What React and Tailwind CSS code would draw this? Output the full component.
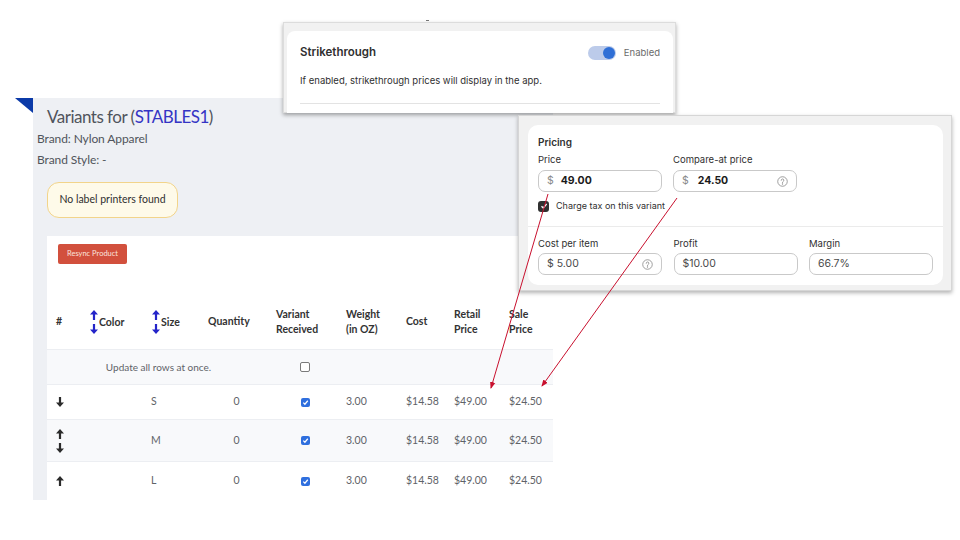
import React from 'react';

// column widths for the variants table (card starts at x=47)
const cols = ['w-[38px]', 'w-[62px]', 'w-[56px]', 'w-[67px]', 'w-[70px]', 'w-[60px]', 'w-[48px]', 'w-[55px]', 'w-[50px]'];

const variants = [
  { size: 'S', moves: ['down'], bg: 'bg-white border-b', h: 'h-[35px]' },
  { size: 'M', moves: ['up', 'down'], bg: 'bg-[#f8f9fb] border-b', h: 'h-[42px]' },
  { size: 'L', moves: ['up'], bg: 'bg-white', h: 'h-[38px]' },
];

const Arrow = ({ dir, color = '#2b2b2b', className = '' }) => (
  <svg width="8" height="10" viewBox="0 0 8 10" className={className}>
    {dir === 'up' ? (
      <polygon points="4,0 8,4.6 5.1,4.6 5.1,10 2.9,10 2.9,4.6 0,4.6" fill={color} />
    ) : (
      <polygon points="4,10 8,5.4 5.1,5.4 5.1,0 2.9,0 2.9,5.4 0,5.4" fill={color} />
    )}
  </svg>
);

const SortLabel = ({ label }) => (
  <div className="flex items-center gap-[1px]">
    <div className="flex flex-col gap-[4px]">
      <Arrow dir="up" color="#2424c9" />
      <Arrow dir="down" color="#2424c9" />
    </div>
    <span className="pt-[1px]">{label}</span>
  </div>
);

const BlueCheck = ({ checked }) =>
  checked ? (
    <div className="w-[9px] h-[9px] rounded-[2px] bg-[#2f6fde] flex items-center justify-center">
      <svg width="7" height="7" viewBox="0 0 8 8">
        <polyline points="1.5,4.2 3.3,6 6.6,2" fill="none" stroke="white" strokeWidth="1.4" />
      </svg>
    </div>
  ) : (
    <div className="w-[10px] h-[10px] rounded-[2px] bg-white border border-[#7a7a7a]" />
  );

const HelpIcon = () => (
  <svg width="11" height="11" viewBox="0 0 12 12" fill="none" stroke="#8a8a8a" strokeWidth="0.9">
    <circle cx="6" cy="6" r="5.2" />
    <path d="M4.6 4.7a1.45 1.45 0 1 1 2.1 1.3c-.5.25-.7.55-.7 1.1" strokeLinecap="round" />
    <circle cx="6" cy="8.7" r="0.35" fill="#8a8a8a" />
  </svg>
);

const PriceInput = ({ children, help }) => (
  <div className="h-[22px] border border-[#c9c9c9] rounded-[7px] flex items-center justify-between pl-[8px] pr-[8px] bg-white">
    <div className="flex items-center text-[10.5px]">{children}</div>
    {help && <HelpIcon />}
  </div>
);

const VariantsPanel = () => (
  <div className="absolute left-[33px] top-[98px] w-[520px] h-[402px] bg-[#eef0f4] font-['Lato',sans-serif] text-[#50545b]">
    <div className="pl-[14px] pt-[8px] text-[17px] tracking-[-0.5px] leading-[22px] text-[#50545c]">
      Variants for (<span className="text-[#3434c4]">STABLES1</span>)
    </div>
    <div className="pl-[4px] text-[12px] tracking-[-0.1px] leading-[21px]">Brand: Nylon Apparel</div>
    <div className="pl-[4px] text-[12px] tracking-[-0.1px] leading-[21px]">Brand Style: -</div>
    <div className="ml-[14px] mt-[12px] w-[131px] h-[36px] rounded-[12px] border-[1.5px] border-[#f2d48a] bg-[#fefae9] flex items-center justify-center text-[10.5px] text-[#2f2f2f]">
      No label printers found
    </div>
    <div className="ml-[14px] mt-[18px] w-[506px] h-[264px] bg-white">
      <div className="pl-[11px] pt-[8px]">
        <div className="w-[69px] h-[20px] rounded-[2px] bg-[#d2503d] text-[#fbe3de] text-[7.5px] flex items-center justify-center">
          Resync Product
        </div>
      </div>
      <div className="mt-[30px] flex h-[56px] items-center text-[10.5px] font-bold text-[#333] leading-[15px] border-b border-[#eceef2]">
        <div className={`${cols[0]} pl-[9px]`}>#</div>
        <div className={`${cols[1]} pl-[5px]`}><SortLabel label="Color" /></div>
        <div className={`${cols[2]} pl-[5px]`}><SortLabel label="Size" /></div>
        <div className={`${cols[3]} pl-[5px]`}>Quantity</div>
        <div className={`${cols[4]} pl-[6px]`}>Variant<br />Received</div>
        <div className={`${cols[5]} pl-[6px]`}>Weight<br />(in OZ)</div>
        <div className={`${cols[6]} pl-[6px]`}>Cost</div>
        <div className={`${cols[7]} pl-[6px]`}>Retail<br />Price</div>
        <div className={`${cols[8]} pl-[6px]`}>Sale<br />Price</div>
      </div>
      <div className="flex h-[35px] items-center bg-[#f8f9fb] border-b border-[#eceef2] text-[10px] text-[#5f6368]">
        <div className="w-[223px] text-center">Update all rows at once.</div>
        <div className={`${cols[4]} flex justify-center`}><BlueCheck checked={false} /></div>
      </div>
      {variants.map((v) => (
        <div key={v.size} className={`flex ${v.h} items-center ${v.bg} border-[#eceef2] text-[10.5px] text-[#5f6368]`}>
          <div className={`${cols[0]} pl-[9px] flex flex-col gap-[4px]`}>
            {v.moves.map((m) => <Arrow key={m} dir={m} />)}
          </div>
          <div className={cols[1]} />
          <div className={`${cols[2]} pl-[4px]`}>{v.size}</div>
          <div className={`${cols[3]} text-center`}>0</div>
          <div className={`${cols[4]} flex justify-center`}><BlueCheck checked /></div>
          <div className={`${cols[5]} pl-[6px]`}>3.00</div>
          <div className={`${cols[6]} pl-[6px]`}>$14.58</div>
          <div className={`${cols[7]} pl-[6px]`}>$49.00</div>
          <div className={`${cols[8]} pl-[6px]`}>$24.50</div>
        </div>
      ))}
    </div>
  </div>
);

const StrikethroughCard = () => (
  <div className="absolute left-[283px] top-[22px] w-[393px] h-[91px] bg-[#f1f1f1] border border-[#dcdcdc] shadow-[0_2px_4px_rgba(0,0,0,0.35)] font-['Inter',sans-serif] text-[#303030]">
    <div className="ml-[3px] mt-[8px] w-[386px] h-[82px] bg-white rounded-t-[8px] px-[13px] pt-[14px]">
      <div className="flex items-center justify-between h-[16px]">
        <span className="text-[11.5px] font-semibold">Strikethrough</span>
        <div className="flex items-center gap-[8px]">
          <div className="w-[28px] h-[14px] rounded-full bg-[#bccbea] flex items-center justify-end pr-[1px]">
            <div className="w-[12px] h-[12px] rounded-full bg-[#2f6fd6]" />
          </div>
          <span className="text-[9.5px] text-[#6b6b6b]">Enabled</span>
        </div>
      </div>
      <div className="mt-[13px] text-[9.5px] leading-[14px]">If enabled, strikethrough prices will display in the app.</div>
      <div className="mt-[15px] border-t border-[#e3e3e3]" />
    </div>
  </div>
);

const PricingCard = () => (
  <div className="absolute left-[518px] top-[115px] w-[434px] h-[176px] bg-[#f1f1f1] border border-[#d6d6d6] shadow-[0_2px_4px_rgba(0,0,0,0.3)] font-['Inter',sans-serif] text-[#303030]">
    <div className="ml-[9px] mt-[9px] w-[415px] h-[160px] bg-white rounded-[10px] pt-[10px]">
      <div className="px-[10px]">
        <div className="text-[10px] font-semibold leading-[14px]">Pricing</div>
        <div className="mt-[5px] grid grid-cols-[124px_124px] gap-x-[11px] text-[9.5px] leading-[12px]">
          <span>Price</span>
          <span>Compare-at price</span>
        </div>
        <div className="mt-[4px] grid grid-cols-[124px_124px] gap-x-[11px]">
          <PriceInput>
            <span className="text-[#8a8a8a]">$</span>
            <span className="ml-[7px] font-bold text-[#1a1a1a]">49.00</span>
          </PriceInput>
          <PriceInput help>
            <span className="text-[#8a8a8a]">$</span>
            <span className="ml-[9px] font-bold text-[#1a1a1a]">24.50</span>
          </PriceInput>
        </div>
        <div className="mt-[8px] flex items-center gap-[7px] h-[12px]">
          <div className="w-[11px] h-[11px] rounded-[3px] bg-[#303030] flex items-center justify-center">
            <svg width="8" height="8" viewBox="0 0 8 8">
              <polyline points="1.5,4.2 3.3,6 6.6,2" fill="none" stroke="white" strokeWidth="1.3" />
            </svg>
          </div>
          <span className="text-[9px]">Charge tax on this variant</span>
        </div>
      </div>
      <div className="mt-[14px] border-t border-[#ebebeb]" />
      <div className="px-[10px]">
        <div className="mt-[11px] grid grid-cols-[124px_124px_124px] gap-x-[11.5px] text-[9.5px] leading-[12px]">
          <span>Cost per item</span>
          <span>Profit</span>
          <span>Margin</span>
        </div>
        <div className="mt-[3px] grid grid-cols-[124px_124px_124px] gap-x-[11.5px] text-[#4a4a4a]">
          <PriceInput help><span>$ 5.00</span></PriceInput>
          <PriceInput><span>$10.00</span></PriceInput>
          <PriceInput><span>66.7%</span></PriceInput>
        </div>
      </div>
    </div>
  </div>
);

const Annotations = () => (
  <svg className="absolute inset-0 pointer-events-none" width="960" height="540" viewBox="0 0 960 540">
    <defs>
      <marker id="head" markerWidth="7" markerHeight="7" refX="6" refY="3.5" orient="auto" markerUnits="userSpaceOnUse">
        <polygon points="0,0.8 7,3.5 0,6.2" fill="#c8102e" />
      </marker>
    </defs>
    <line x1="548" y1="194" x2="491" y2="388" stroke="#c8102e" strokeWidth="1" markerEnd="url(#head)" />
    <line x1="677" y1="198" x2="542" y2="386" stroke="#c8102e" strokeWidth="1" markerEnd="url(#head)" />
  </svg>
);

export default function App() {
  return (
    <div className="relative w-[960px] h-[540px] overflow-hidden bg-white">
      <svg className="absolute left-[15px] top-[98px]" width="18" height="15" viewBox="0 0 18 15">
        <polygon points="0,0 18,0 18,15" fill="#0b3aa8" />
      </svg>
      <VariantsPanel />
      <div className="absolute left-[426px] top-[20px] w-[3px] h-[1px] bg-[#777]" />
      <StrikethroughCard />
      <PricingCard />
      <Annotations />
    </div>
  );
}
